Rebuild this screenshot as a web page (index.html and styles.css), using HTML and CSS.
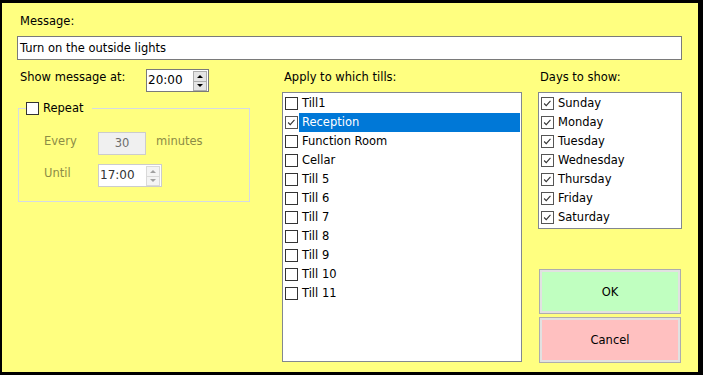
FILE: index.html
```html
<!DOCTYPE html>
<html lang="en">
<head>
    <meta charset="UTF-8">
    <title>Message</title>
    <link rel="stylesheet" href="styles.css">
</head>
<body>
    <div class="dialog">
        <div class="caption">Message:</div>
        <div class="textbox">Turn on the outside lights</div>

        <div class="columns">
            <div class="col-left">
                <div class="show-row">
                    <span class="show-label">Show message at:</span>
                    <div class="spin time-box">
                        <span class="spin-value">20:00</span>
                        <span class="spin-btns">
                            <span class="spin-btn"><i class="arrow-up"></i></span>
                            <span class="spin-btn"><i class="arrow-down"></i></span>
                        </span>
                    </div>
                </div>

                <fieldset class="repeat-group">
                    <legend><span class="check"></span>Repeat</legend>
                    <div class="group-row">
                        <span class="dim-label">Every</span>
                        <div class="num-box">30</div>
                        <span class="dim-label unit">minutes</span>
                    </div>
                    <div class="group-row">
                        <span class="dim-label">Until</span>
                        <div class="spin until-box disabled">
                            <span class="spin-value">17:00</span>
                            <span class="spin-btns">
                                <span class="spin-btn"><i class="arrow-up"></i></span>
                                <span class="spin-btn"><i class="arrow-down"></i></span>
                            </span>
                        </div>
                    </div>
                </fieldset>
            </div>

            <div class="col-mid">
                <div class="col-title">Apply to which tills:</div>
                <div class="checklist tills">
                    <div class="item"><span class="check"></span><span class="item-text">Till1</span></div>
                    <div class="item selected"><span class="check checked"><svg viewBox="0 0 13 13"><path d="M2.5 6.5 L5 9 L10 3.5"/></svg></span><span class="item-text">Reception</span></div>
                    <div class="item"><span class="check"></span><span class="item-text">Function Room</span></div>
                    <div class="item"><span class="check"></span><span class="item-text">Cellar</span></div>
                    <div class="item"><span class="check"></span><span class="item-text">Till 5</span></div>
                    <div class="item"><span class="check"></span><span class="item-text">Till 6</span></div>
                    <div class="item"><span class="check"></span><span class="item-text">Till 7</span></div>
                    <div class="item"><span class="check"></span><span class="item-text">Till 8</span></div>
                    <div class="item"><span class="check"></span><span class="item-text">Till 9</span></div>
                    <div class="item"><span class="check"></span><span class="item-text">Till 10</span></div>
                    <div class="item"><span class="check"></span><span class="item-text">Till 11</span></div>
                </div>
            </div>

            <div class="col-right">
                <div class="col-title">Days to show:</div>
                <div class="checklist days">
                    <div class="item"><span class="check checked"><svg viewBox="0 0 13 13"><path d="M2.5 6.5 L5 9 L10 3.5"/></svg></span><span class="item-text">Sunday</span></div>
                    <div class="item"><span class="check checked"><svg viewBox="0 0 13 13"><path d="M2.5 6.5 L5 9 L10 3.5"/></svg></span><span class="item-text">Monday</span></div>
                    <div class="item"><span class="check checked"><svg viewBox="0 0 13 13"><path d="M2.5 6.5 L5 9 L10 3.5"/></svg></span><span class="item-text">Tuesday</span></div>
                    <div class="item"><span class="check checked"><svg viewBox="0 0 13 13"><path d="M2.5 6.5 L5 9 L10 3.5"/></svg></span><span class="item-text">Wednesday</span></div>
                    <div class="item"><span class="check checked"><svg viewBox="0 0 13 13"><path d="M2.5 6.5 L5 9 L10 3.5"/></svg></span><span class="item-text">Thursday</span></div>
                    <div class="item"><span class="check checked"><svg viewBox="0 0 13 13"><path d="M2.5 6.5 L5 9 L10 3.5"/></svg></span><span class="item-text">Friday</span></div>
                    <div class="item"><span class="check checked"><svg viewBox="0 0 13 13"><path d="M2.5 6.5 L5 9 L10 3.5"/></svg></span><span class="item-text">Saturday</span></div>
                </div>
                <button class="dlg-button ok">OK</button>
                <button class="dlg-button cancel">Cancel</button>
            </div>
        </div>
    </div>
</body>
</html>
```

FILE: styles.css
```css
* {
    margin: 0;
    padding: 0;
    box-sizing: border-box;
}

body {
    background-color: #000;
    font-family: "DejaVu Sans", Verdana, sans-serif;
    font-size: 11.5px;
    color: #000;
}

.dialog {
    margin: 3px 5px 3px 2px;
    height: 369px;
    background-color: #ffff80;
    padding: 11px 16px 0 15px;
}

.caption {
    line-height: 14px;
    padding-left: 3px;
}

.textbox {
    margin-top: 8px;
    height: 24px;
    line-height: 22px;
    border: 1px solid #7a7a7a;
    background-color: #fff;
    padding-left: 2px;
}

.columns {
    margin-top: 9px;
    display: grid;
    grid-template-columns: 233px 32px 240px 16px 144px;
}

.col-mid { grid-column: 3; }
.col-right { grid-column: 5; }

/* left column */
.show-row {
    display: flex;
    align-items: flex-start;
    height: 23px;
}

.show-label {
    flex: 0 0 129px;
    padding: 1px 0 0 3px;
    line-height: 14px;
}

.spin {
    display: flex;
    align-items: stretch;
    height: 23px;
    border: 1px solid #7a7a7a;
    background-color: #fff;
}

.time-box {
    width: 63px;
}

.spin-value {
    padding-left: 1px;
    line-height: 21px;
    font-size: 12px;
}

.spin-btns {
    margin: 1px 1px 0 auto;
    width: 14px;
    height: 20px;
    display: flex;
    flex-direction: column;
}

.spin-btn {
    flex: 1;
    border: 1px solid #adadad;
    background-color: #e5e5e5;
    display: flex;
    align-items: center;
    justify-content: center;
}

.spin-btn + .spin-btn {
    border-top: none;
}

.arrow-up,
.arrow-down {
    width: 0;
    height: 0;
    border-left: 3px solid transparent;
    border-right: 3px solid transparent;
}

.arrow-up { border-bottom: 3px solid #000; }
.arrow-down { border-top: 3px solid #000; }

.repeat-group {
    margin: 9px 0 0 1px;
    width: 232px;
    border: 1px solid #d5dbe5;
    padding: 17px 0 14px 0;
}

.repeat-group legend {
    margin-left: 7px;
    padding-right: 9px;
    line-height: 14px;
    display: flex;
    align-items: center;
    gap: 4px;
}

.group-row {
    display: flex;
    align-items: flex-start;
    height: 23px;
    padding-left: 25px;
}

.group-row + .group-row {
    margin-top: 9px;
}

.dim-label {
    flex: 0 0 54px;
    margin-top: 2px;
    line-height: 14px;
    color: #8c8c46;
}

.dim-label.unit {
    flex: none;
    margin-left: 10px;
}

.num-box {
    width: 48px;
    height: 23px;
    border: 1px solid #cccccc;
    background-color: #f0f0f0;
    color: #6d6d6d;
    text-align: center;
    line-height: 21px;
}

.until-box {
    width: 64px;
    border-color: #cccccc;
}

.until-box .spin-value {
    color: #333;
}

.disabled .spin-btn {
    border-color: #d9d9d9;
    background-color: #f4f4f4;
}

.disabled .arrow-up { border-bottom-color: #a0a0a0; }
.disabled .arrow-down { border-top-color: #a0a0a0; }

/* check lists */
.col-title {
    height: 23px;
    padding: 1px 0 0 2px;
    line-height: 14px;
}

.checklist {
    border: 1px solid #828790;
    background-color: #fff;
    padding: 1px 1px 0 2px;
}

.tills { height: 270px; }
.days { height: 137px; }

.item {
    display: flex;
    align-items: center;
    height: 19px;
}

.check {
    width: 13px;
    height: 13px;
    flex: none;
    border: 1px solid #333;
    background-color: #fff;
}

.check.checked {
    border-color: #555;
}

.check svg {
    display: block;
    width: 11px;
    height: 11px;
    fill: none;
    stroke: #333;
    stroke-width: 1.3;
}

.item .check {
    margin-right: 1px;
}

.item-text {
    flex: 1;
    line-height: 19px;
    padding-left: 3px;
}

.item.selected .item-text {
    background-color: #0078d7;
    color: #fff;
}

/* buttons */
.dlg-button {
    display: block;
    width: 142px;
    margin: 0 1px;
    border: 1px solid #adadad;
    box-shadow: inset 0 0 0 2px #e1e1e1;
    font: inherit;
    color: #000;
}

.ok {
    margin-top: 40px;
    height: 45px;
    background-color: #c0ffc0;
}

.cancel {
    margin-top: 3px;
    height: 46px;
    background-color: #ffc0c0;
}
```
